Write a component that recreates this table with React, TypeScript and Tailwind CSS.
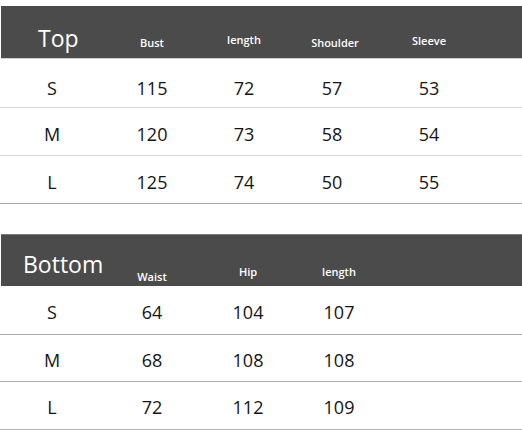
import React from "react";

const font = { fontFamily: '"Open Sans", "Noto Sans", sans-serif' };

type Row = { size: string; vals: string[]; cls: string; pt: string };

export default function App() {
  const topRows: Row[] = [
    { size: "S", vals: ["115", "72", "57", "53"], cls: "h-[49px] border-b border-[#dcdcdc]", pt: "pt-[9px]" },
    { size: "M", vals: ["120", "73", "58", "54"], cls: "h-[48px] border-b border-[#dcdcdc]", pt: "pt-[5px]" },
    { size: "L", vals: ["125", "74", "50", "55"], cls: "h-[48px] border-b border-[#a9a9a9]", pt: "pt-[4px]" },
  ];
  const bottomRows: Row[] = [
    { size: "S", vals: ["64", "104", "107"], cls: "h-[49px] border-b border-[#ababab]", pt: "pt-[4px]" },
    { size: "M", vals: ["68", "108", "108"], cls: "h-[47px] border-b border-[#ababab]", pt: "pt-[4px]" },
    { size: "L", vals: ["72", "112", "109"], cls: "h-[48px] border-b border-[#b5b5b5]", pt: "pt-[2px]" },
  ];

  return (
    <div className="w-[522px] h-[434px] bg-white overflow-hidden pt-[6px]" style={font}>
      {/* Top header */}
      <div className="ml-[1px] h-[53px] bg-[#4b4b4b] border-b border-[#cfcfcf] grid grid-cols-[103px_96px_88px_88px_106px_1fr] items-end text-white">
        <div className="pl-[37px] pb-[8px] text-[23px] font-medium leading-none">Top</div>
        <div className="text-center pb-[10px] text-[11px] font-semibold leading-none">Bust</div>
        <div className="text-center pb-[13px] text-[11px] font-semibold leading-none">length</div>
        <div className="text-center pl-[6px] pb-[10px] text-[11px] font-semibold leading-none">Shoulder</div>
        <div className="text-center pb-[12px] text-[11px] font-semibold leading-none">Sleeve</div>
        <div />
      </div>
      {topRows.map((r) => (
        <div
          key={r.size}
          className={`grid grid-cols-[104px_96px_88px_88px_106px_1fr] items-center text-[18px] leading-none text-[#141414] ${r.cls}`}
        >
          <div className={`text-center ${r.pt}`}>{r.size}</div>
          {r.vals.map((v, i) => (
            <div key={i} className={`text-center ${r.pt}`}>
              {v}
            </div>
          ))}
          <div />
        </div>
      ))}

      <div className="h-[30px]" />

      {/* Bottom header */}
      <div className="ml-[1px] h-[52px] bg-[#4b4b4b] border-t border-[#7a7a7a] grid grid-cols-[103px_96px_96px_86px_1fr] items-end text-white overflow-hidden">
        <div className="pl-[22px] pb-[10px] text-[23px] font-medium leading-none">Bottom</div>
        <div className="relative text-center pb-[4px] text-[11px] font-semibold leading-none">
          Waist
          <span className="absolute left-0 right-0 top-[15px] text-center">Waist</span>
        </div>
        <div className="text-center pb-[9px] text-[11px] font-semibold leading-none">Hip</div>
        <div className="text-center pb-[9px] text-[11px] font-semibold leading-none">length</div>
        <div />
      </div>
      {bottomRows.map((r) => (
        <div
          key={r.size}
          className={`grid grid-cols-[104px_96px_96px_86px_1fr] items-center text-[18px] leading-none text-[#141414] ${r.cls}`}
        >
          <div className={`text-center ${r.pt}`}>{r.size}</div>
          {r.vals.map((v, i) => (
            <div key={i} className={`text-center ${r.pt}`}>
              {v}
            </div>
          ))}
          <div />
        </div>
      ))}
    </div>
  );
}
